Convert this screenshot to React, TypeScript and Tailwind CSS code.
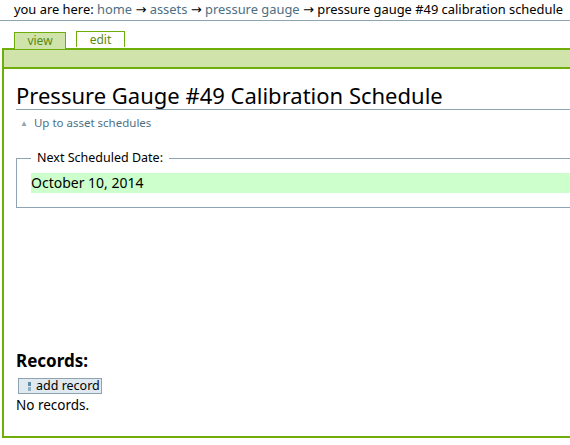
const Arrow = () => (
  <span className="text-[13px]" style={{ fontFamily: '"DejaVu Sans", sans-serif' }}>
    →
  </span>
);

export default function App() {
  return (
    <div className="w-[620px] overflow-hidden text-[13px] text-black bg-white h-[445px]" style={{ fontFamily: '"Noto Sans", "Lucida Grande", sans-serif' }}>
      {/* breadcrumb */}
      <div className="h-[21px] border-b border-[#8ea4b2] pl-[14px] pt-[2px] text-[12.9px] leading-[15px] whitespace-nowrap">
        you are here: <a className="text-[#4d6f83]">home</a> <Arrow /> <a className="text-[#4d6f83]">assets</a> <Arrow />{" "}
        <a className="text-[#4d6f83]">pressure gauge</a> <Arrow /> pressure gauge #49 calibration schedule
      </div>

      {/* tabs */}
      <div className="flex gap-[10px] pl-[14px] pt-[10px]">
        <div className="w-[52px] h-[17px] border border-b-0 border-[#6fae0a] bg-[#cfe3aa] text-center text-[12px] leading-[15px] text-[#5a8a12] relative top-[1px]">
          view
        </div>
        <div className="w-[49px] h-[16px] border border-b-0 border-[#6fae0a] bg-white text-center text-[12px] leading-[15px] text-[#5a8a12]">
          edit
        </div>
      </div>

      <div className="ml-[2px] h-[390px] border-l-2 border-b-2 border-[#6fae0a]">
        <div className="h-[21px] bg-[#cfe3aa] border-y-2 border-[#6fae0a]"></div>

        <div className="pl-[12px] pt-[13px]">
          <h1 className="text-[22px] leading-[26px] border-b border-[#8ea4b2] pb-[1px] whitespace-nowrap">
            Pressure Gauge #49 Calibration Schedule
          </h1>
          <div className="mt-[6px] pl-[4px] text-[11.5px] leading-[14px] text-[#4d6f83] flex items-center gap-[6px]">
            <span className="text-[8px] text-[#8ea4b2]">▲</span>
            <span>Up to asset schedules</span>
          </div>

          <fieldset className="mt-[21px] border border-[#8ea4b2] pl-[14px] pb-[14px]">
            <legend className="px-[6px] text-[12.5px] leading-[14px]">Next Scheduled Date:</legend>
            <div className="mt-[8px] bg-[#ccffcc] h-[20px] text-[14px] leading-[20px]">October 10, 2014</div>
          </fieldset>

          <h2 className="mt-[143px] text-[17px] font-bold leading-[20px]">Records:</h2>
          <button className="mt-[7px] ml-[2px] h-[16px] flex items-center gap-[5px] border border-[#8ea4b2] bg-[#dfe9ef] pl-[9px] pr-[1px] text-[12.5px] leading-[14px]">
            <span className="flex flex-col gap-[1px]">
              <span className="w-[3px] h-[4px] bg-[#5f8aa5]"></span>
              <span className="w-[3px] h-[4px] bg-[#8fb2c6]"></span>
            </span>
            add record
          </button>
          <div className="mt-[3px] text-[13.5px] leading-[16px]">No records.</div>
        </div>
      </div>
    </div>
  );
}
